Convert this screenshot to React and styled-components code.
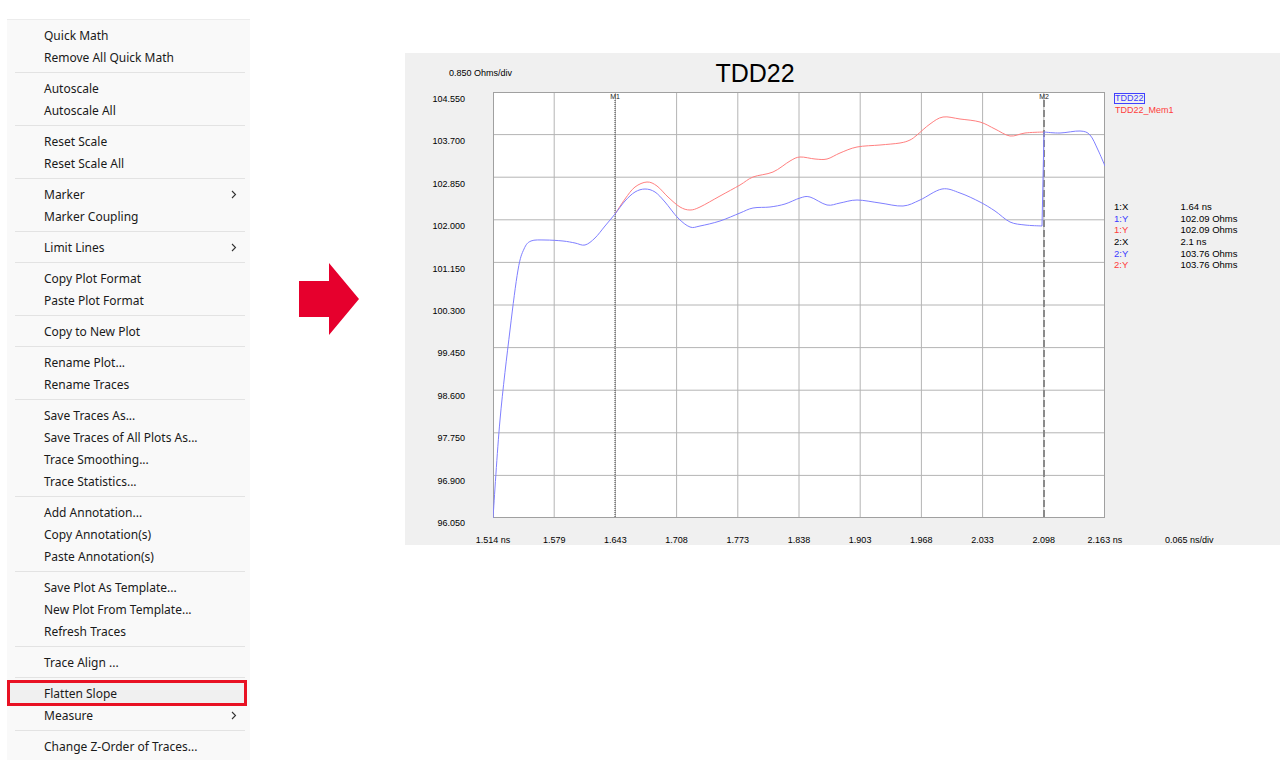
import React from 'react'
import styled, { createGlobalStyle } from 'styled-components'

const GlobalStyle = createGlobalStyle`
  body {
    margin: 0;
    background: #ffffff;
  }
`

const menuGroups = [
  [{ label: 'Quick Math' }, { label: 'Remove All Quick Math' }],
  [{ label: 'Autoscale' }, { label: 'Autoscale All' }],
  [{ label: 'Reset Scale' }, { label: 'Reset Scale All' }],
  [{ label: 'Marker', sub: true }, { label: 'Marker Coupling' }],
  [{ label: 'Limit Lines', sub: true }],
  [{ label: 'Copy Plot Format' }, { label: 'Paste Plot Format' }],
  [{ label: 'Copy to New Plot' }],
  [{ label: 'Rename Plot...' }, { label: 'Rename Traces' }],
  [
    { label: 'Save Traces As...' },
    { label: 'Save Traces of All Plots As...' },
    { label: 'Trace Smoothing...' },
    { label: 'Trace Statistics...' },
  ],
  [{ label: 'Add Annotation...' }, { label: 'Copy Annotation(s)' }, { label: 'Paste Annotation(s)' }],
  [{ label: 'Save Plot As Template...' }, { label: 'New Plot From Template...' }, { label: 'Refresh Traces' }],
  [{ label: 'Trace Align ...' }],
  [{ label: 'Flatten Slope', active: true }, { label: 'Measure', sub: true }],
  [{ label: 'Change Z-Order of Traces...' }],
]

const yLabels = ['104.550', '103.700', '102.850', '102.000', '101.150', '100.300', '99.450', '98.600', '97.750', '96.900', '96.050']
const xLabels = ['1.514 ns', '1.579', '1.643', '1.708', '1.773', '1.838', '1.903', '1.968', '2.033', '2.098', '2.163 ns']

const readouts = [
  { name: '1:X', value: '1.64 ns', tone: 'black' },
  { name: '1:Y', value: '102.09 Ohms', tone: 'blue' },
  { name: '1:Y', value: '102.09 Ohms', tone: 'red' },
  { name: '2:X', value: '2.1 ns', tone: 'black' },
  { name: '2:Y', value: '103.76 Ohms', tone: 'blue' },
  { name: '2:Y', value: '103.76 Ohms', tone: 'red' },
]

const toneColor = { black: '#000000', blue: '#3c3cff', red: '#ff3c3c' }

// trace samples, in page pixels of the plot box (493..1105, 92..518)
const blueA = [
  [493, 518], [500, 420], [510, 330], [518, 270], [524, 249], [531, 241], [545, 240], [563, 241],
  [575, 243], [585, 245], [595, 238], [605, 226], [615, 214], [625, 201], [635, 192], [645, 189],
  [655, 192], [665, 202], [678, 218], [690, 227], [700, 226], [720, 221], [740, 213], [753, 208],
  [770, 207], [785, 204], [800, 198], [810, 197], [827, 205], [840, 203], [857, 200], [880, 203],
  [903, 206], [920, 200], [942, 189], [960, 193], [980, 202], [995, 211], [1010, 222], [1025, 225],
  [1042, 226],
]
const blueB = [[1044, 132], [1060, 133], [1080, 131], [1090, 135], [1098, 150], [1105, 166]]
const red = [
  [615, 214], [625, 199], [635, 187], [647, 182], [657, 186], [668, 197], [680, 207], [690, 210],
  [700, 207], [720, 196], [740, 185], [753, 177], [773, 172], [790, 161], [800, 157], [815, 159],
  [827, 159], [840, 153], [857, 147], [880, 145], [900, 143], [910, 140], [917, 135], [930, 124],
  [943, 117], [960, 119], [980, 122], [995, 129], [1010, 136], [1025, 133], [1043, 132],
]

function smooth(pts) {
  let d = `M${pts[0][0]},${pts[0][1]}`
  for (let i = 0; i < pts.length - 1; i++) {
    const p0 = pts[i - 1] || pts[i]
    const p1 = pts[i]
    const p2 = pts[i + 1]
    const p3 = pts[i + 2] || p2
    const c1 = [p1[0] + (p2[0] - p0[0]) / 6, p1[1] + (p2[1] - p0[1]) / 6]
    const c2 = [p2[0] - (p3[0] - p1[0]) / 6, p2[1] - (p3[1] - p1[1]) / 6]
    d += ` C${c1[0].toFixed(2)},${c1[1].toFixed(2)} ${c2[0].toFixed(2)},${c2[1].toFixed(2)} ${p2[0]},${p2[1]}`
  }
  return d
}

const Page = styled.div`
  display: flex;
  align-items: flex-start;
  min-height: 771px;
`

const Menu = styled.div`
  width: 243px;
  margin: 19px 0 0 7px;
  padding: 4px 0 3px;
  background: #f9f9f9;
  border-top: 1px solid #ececec;
  box-sizing: border-box;
  font-family: "Noto Sans", "Open Sans", sans-serif;
  font-size: 12px;
  color: #1a1a1a;
`

const Item = styled.div`
  display: flex;
  align-items: center;
  justify-content: space-between;
  height: 22px;
  padding: 0 13px 0 ${p => (p.$active ? 35 : 37)}px;
  margin: 0 ${p => (p.$active ? '5px 0 2px' : '0')};
  background: ${p => (p.$active ? '#f0f0f0' : 'transparent')};
  outline: ${p => (p.$active ? '3px solid #e81123' : 'none')};
  outline-offset: -1px;
  white-space: nowrap;
`

const Separator = styled.div`
  height: 9px;
  display: flex;
  align-items: center;
  padding: 0 5px 0 8px;

  &::after {
    content: '';
    flex: 1;
    height: 1px;
    background: #e3e3e3;
  }
`

const ArrowWrap = styled.div`
  margin: 263px 0 0 49px;
  width: 60px;
  height: 72px;
  flex: none;
`

const Panel = styled.div`
  margin: 53px 0 0 46px;
  width: 875px;
  height: 492px;
  flex: none;
  background: #f0f0f0;
  display: grid;
  grid-template-columns: 88px 612px 1fr;
  grid-template-rows: 39px 426px 1fr;
  font-family: "Liberation Sans", Arial, sans-serif;
  color: #000;
`

const UnitLabel = styled.div`
  grid-row: 1;
  grid-column: 1 / 3;
  align-self: center;
  justify-self: start;
  padding-left: 44px;
  font-size: 9px;
`

const Title = styled.div`
  grid-row: 1;
  grid-column: 1 / 3;
  align-self: center;
  justify-self: center;
  font-size: 25px;
  line-height: 28px;
`

const YAxis = styled.div`
  grid-row: 2 / 4;
  grid-column: 1;
  display: flex;
  flex-direction: column;
  align-items: flex-end;
  padding-right: 28px;
  font-size: 9px;
`

const YTick = styled.div`
  height: 42.4px;
  line-height: 15px;
  flex: none;
`

const PlotBox = styled.svg`
  grid-row: 2;
  grid-column: 2;
  display: block;
  width: 612px;
  height: 426px;
  background: #ffffff;
`

const XAxis = styled.div`
  grid-row: 3;
  grid-column: 2;
  display: grid;
  grid-template-columns: repeat(11, 61.2px);
  margin-left: -30.6px;
  padding-top: 16px;
  font-size: 9px;
  line-height: 12px;
  text-align: center;
`

const ScaleLabel = styled.div`
  grid-row: 3;
  grid-column: 3;
  padding: 16px 0 0 60px;
  font-size: 9px;
  line-height: 12px;
`

const Legend = styled.div`
  grid-row: 2;
  grid-column: 3;
  padding-left: 9px;
  font-size: 9.5px;
`

const TraceTag = styled.div`
  display: inline-block;
  font-size: 9px;
  line-height: 9px;
  color: ${p => p.$color};
  border: 1px solid ${p => (p.$boxed ? '#4040ff' : 'transparent')};
`

const Readouts = styled.div`
  display: grid;
  grid-template-columns: 66.5px auto;
  grid-auto-rows: 11.7px;
  line-height: 11.7px;
  margin-top: 85px;
`

const ReadName = styled.div`
  color: ${p => toneColor[p.$tone]};
`

function Chevron() {
  return (
    <svg width="6" height="9" viewBox="0 0 6 9">
      <polyline points="1,1 4.5,4.5 1,8" fill="none" stroke="#333" strokeWidth="1.1" />
    </svg>
  )
}

function ContextMenu() {
  return (
    <Menu>
      {menuGroups.map((group, gi) => (
        <React.Fragment key={gi}>
          {gi > 0 && <Separator />}
          {group.map(item => (
            <Item key={item.label} $active={item.active}>
              <span>{item.label}</span>
              {item.sub && <Chevron />}
            </Item>
          ))}
        </React.Fragment>
      ))}
    </Menu>
  )
}

function Plot() {
  const xs = Array.from({ length: 11 }, (_, i) => 493 + 61.2 * i)
  const ys = Array.from({ length: 11 }, (_, i) => 92 + 42.6 * i)
  return (
    <PlotBox viewBox="493 92 612 426">
      {xs.slice(1, 10).map(x => (
        <line key={x} x1={x} y1={92} x2={x} y2={518} stroke="#b4b4b4" strokeWidth="1" />
      ))}
      {ys.slice(1, 10).map(y => (
        <line key={y} x1={493} y1={y} x2={1105} y2={y} stroke="#b4b4b4" strokeWidth="1" />
      ))}
      <rect x="493.5" y="92.5" width="611" height="425" fill="none" stroke="#a0a0a0" strokeWidth="1" />
      <line x1="615" y1="100" x2="615" y2="518" stroke="#444" strokeWidth="1" strokeDasharray="1 1" />
      <line x1="1044" y1="100" x2="1044" y2="518" stroke="#8a8a8a" strokeWidth="2" strokeDasharray="7 3" />
      <text x="615" y="99" fontSize="7" textAnchor="middle" fontFamily="Liberation Sans, sans-serif" fill="#222">M1</text>
      <text x="1044" y="99" fontSize="7" textAnchor="middle" fontFamily="Liberation Sans, sans-serif" fill="#222">M2</text>
      <path d={smooth(red)} fill="none" stroke="#ff8080" strokeWidth="1" />
      <path
        d={`${smooth(blueA)} L1044,132 ${smooth(blueB).replace(/^M[^ ]+/, '')}`}
        fill="none"
        stroke="#7f7fff"
        strokeWidth="1"
      />
    </PlotBox>
  )
}

export default function App() {
  return (
    <Page>
      <GlobalStyle />
      <ContextMenu />
      <ArrowWrap>
        <svg width="60" height="72" viewBox="0 0 60 72">
          <polygon points="0,18 30,18 30,0 60,36 30,72 30,54 0,54" fill="#e6002d" />
        </svg>
      </ArrowWrap>
      <Panel>
        <UnitLabel>0.850 Ohms/div</UnitLabel>
        <Title>TDD22</Title>
        <YAxis>
          {yLabels.map(l => (
            <YTick key={l}>{l}</YTick>
          ))}
        </YAxis>
        <Plot />
        <XAxis>
          {xLabels.map(l => (
            <div key={l}>{l}</div>
          ))}
        </XAxis>
        <ScaleLabel>0.065 ns/div</ScaleLabel>
        <Legend>
          <TraceTag $color="#3c3cff" $boxed>TDD22</TraceTag>
          <div>
            <TraceTag $color="#ff3c3c">TDD22_Mem1</TraceTag>
          </div>
          <Readouts>
            {readouts.map((r, i) => (
              <React.Fragment key={i}>
                <ReadName $tone={r.tone}>{r.name}</ReadName>
                <div>{r.value}</div>
              </React.Fragment>
            ))}
          </Readouts>
        </Legend>
      </Panel>
    </Page>
  )
}
